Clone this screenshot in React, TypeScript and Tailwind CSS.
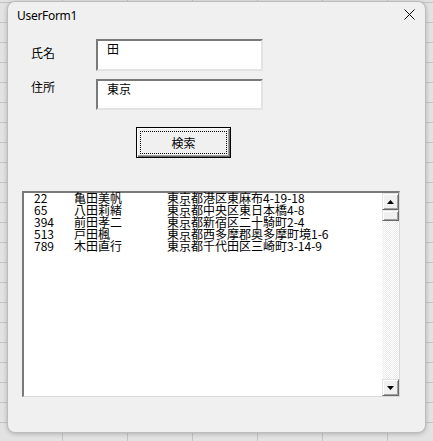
const rows = [
  ["22", "亀田美帆", "東京都港区東麻布4-19-18"],
  ["65", "八田莉緒", "東京都中央区東日本橋4-8"],
  ["394", "前田孝二", "東京都新宿区二十騎町2-4"],
  ["513", "戸田楓", "東京都西多摩郡奥多摩町境1-6"],
  ["789", "木田直行", "東京都千代田区三崎町3-14-9"],
];

const jp = "font-['Noto_Sans_CJK_JP',sans-serif]";

function ScrollBtn({ dir }: { dir: "up" | "down" }) {
  return (
    <div className="w-[17px] h-[17px] shrink-0 bg-[#f0f0f0] border border-t-[#e3e3e3] border-l-[#e3e3e3] border-r-[#696969] border-b-[#696969] shadow-[inset_1px_1px_0_#ffffff,inset_-1px_-1px_0_#a0a0a0] flex items-center justify-center">
      <svg width="7" height="4" viewBox="0 0 7 4">
        {dir === "up" ? (
          <polygon points="3.5,0 7,4 0,4" fill="#000" />
        ) : (
          <polygon points="0,0 7,0 3.5,4" fill="#000" />
        )}
      </svg>
    </div>
  );
}

function TextBox({ value, h }: { value: string; h: string }) {
  return (
    <div
      className={`w-[167px] ${h} bg-white border-2 border-t-[#7a7a7a] border-l-[#7a7a7a] border-r-[#e3e3e3] border-b-[#e3e3e3] pl-[9px] text-[12px] leading-[16px] text-black ${jp}`}
    >
      {value}
    </div>
  );
}

export default function App() {
  return (
    <div className="w-[433px] h-[441px] overflow-hidden bg-[#e2e2e2] bg-[linear-gradient(to_right,#c4c4c4_1px,transparent_1px),linear-gradient(to_bottom,#c4c4c4_1px,transparent_1px)] bg-[size:65px_20px] bg-[position:62px_2px] pt-[1px] pl-[7px]">
      <div className="w-[419px] h-[432px] bg-[#f0f0f0] border border-[#bcbcbc] rounded-[8px] shadow-[0_1px_4px_rgba(0,0,0,0.22)] flex flex-col">
        {/* title bar */}
        <div className="h-[28px] flex items-center justify-between pl-[9px] pr-[10px]">
          <span className="font-['Noto_Sans',sans-serif] text-[12px] tracking-[-0.3px] text-black">
            UserForm1
          </span>
          <svg width="11" height="11" viewBox="0 0 11 11" className="mb-[3px]">
            <path d="M0.5 0.5 L10.5 10.5 M10.5 0.5 L0.5 10.5" stroke="#000" strokeWidth="1" fill="none" />
          </svg>
        </div>

        {/* row 1 */}
        <div className="mt-[9px] flex pl-[23px]">
          <div className={`w-[65px] pt-[6px] text-[12px] leading-[16px] text-black ${jp}`}>氏名</div>
          <TextBox value="田" h="h-[32px]" />
        </div>

        {/* row 2 */}
        <div className="mt-[8px] flex pl-[23px]">
          <div className={`w-[65px] pt-0 text-[12px] leading-[16px] text-black ${jp}`}>住所</div>
          <TextBox value="東京" h="h-[31px]" />
        </div>

        {/* button */}
        <div className="mt-[17px] ml-[128px] w-[95px] h-[31px] border border-black bg-[#f0f0f0] shadow-[inset_1px_1px_0_#ffffff,inset_-1px_-1px_0_#696969,inset_-2px_-2px_0_#a0a0a0] p-[3px]">
          <div className={`w-full h-full border border-dotted border-black flex items-center justify-center text-[12px] leading-[16px] text-black ${jp}`}>
            検索
          </div>
        </div>

        {/* list box */}
        <div className="mt-[33px] ml-[14px] w-[378px] h-[206px] bg-white border-t-2 border-l-2 border-r border-b border-t-[#7a7a7a] border-l-[#7a7a7a] border-r-[#d9d9d9] border-b-[#d9d9d9] flex">
          <div className={`flex-1 pl-[10px] -mt-[1px] text-[12px] leading-[12px] text-black ${jp}`}>
            {rows.map((r) => (
              <div key={r[0]} className="flex h-[12px]">
                <div className="w-[40px]">{r[0]}</div>
                <div className="w-[93px]">{r[1]}</div>
                <div>{r[2]}</div>
              </div>
            ))}
          </div>
          <div className="w-[17px] flex flex-col">
            <ScrollBtn dir="up" />
            <div className="w-[17px] h-[11px] shrink-0 bg-[#f0f0f0] border border-t-[#e3e3e3] border-l-[#e3e3e3] border-r-[#696969] border-b-[#696969] shadow-[inset_1px_1px_0_#ffffff,inset_-1px_-1px_0_#a0a0a0]" />
            <div className="flex-1 bg-[repeating-conic-gradient(#ffffff_0_25%,#ebebeb_0_50%)] bg-[size:2px_2px]" />
            <ScrollBtn dir="down" />
          </div>
        </div>
      </div>
    </div>
  );
}
